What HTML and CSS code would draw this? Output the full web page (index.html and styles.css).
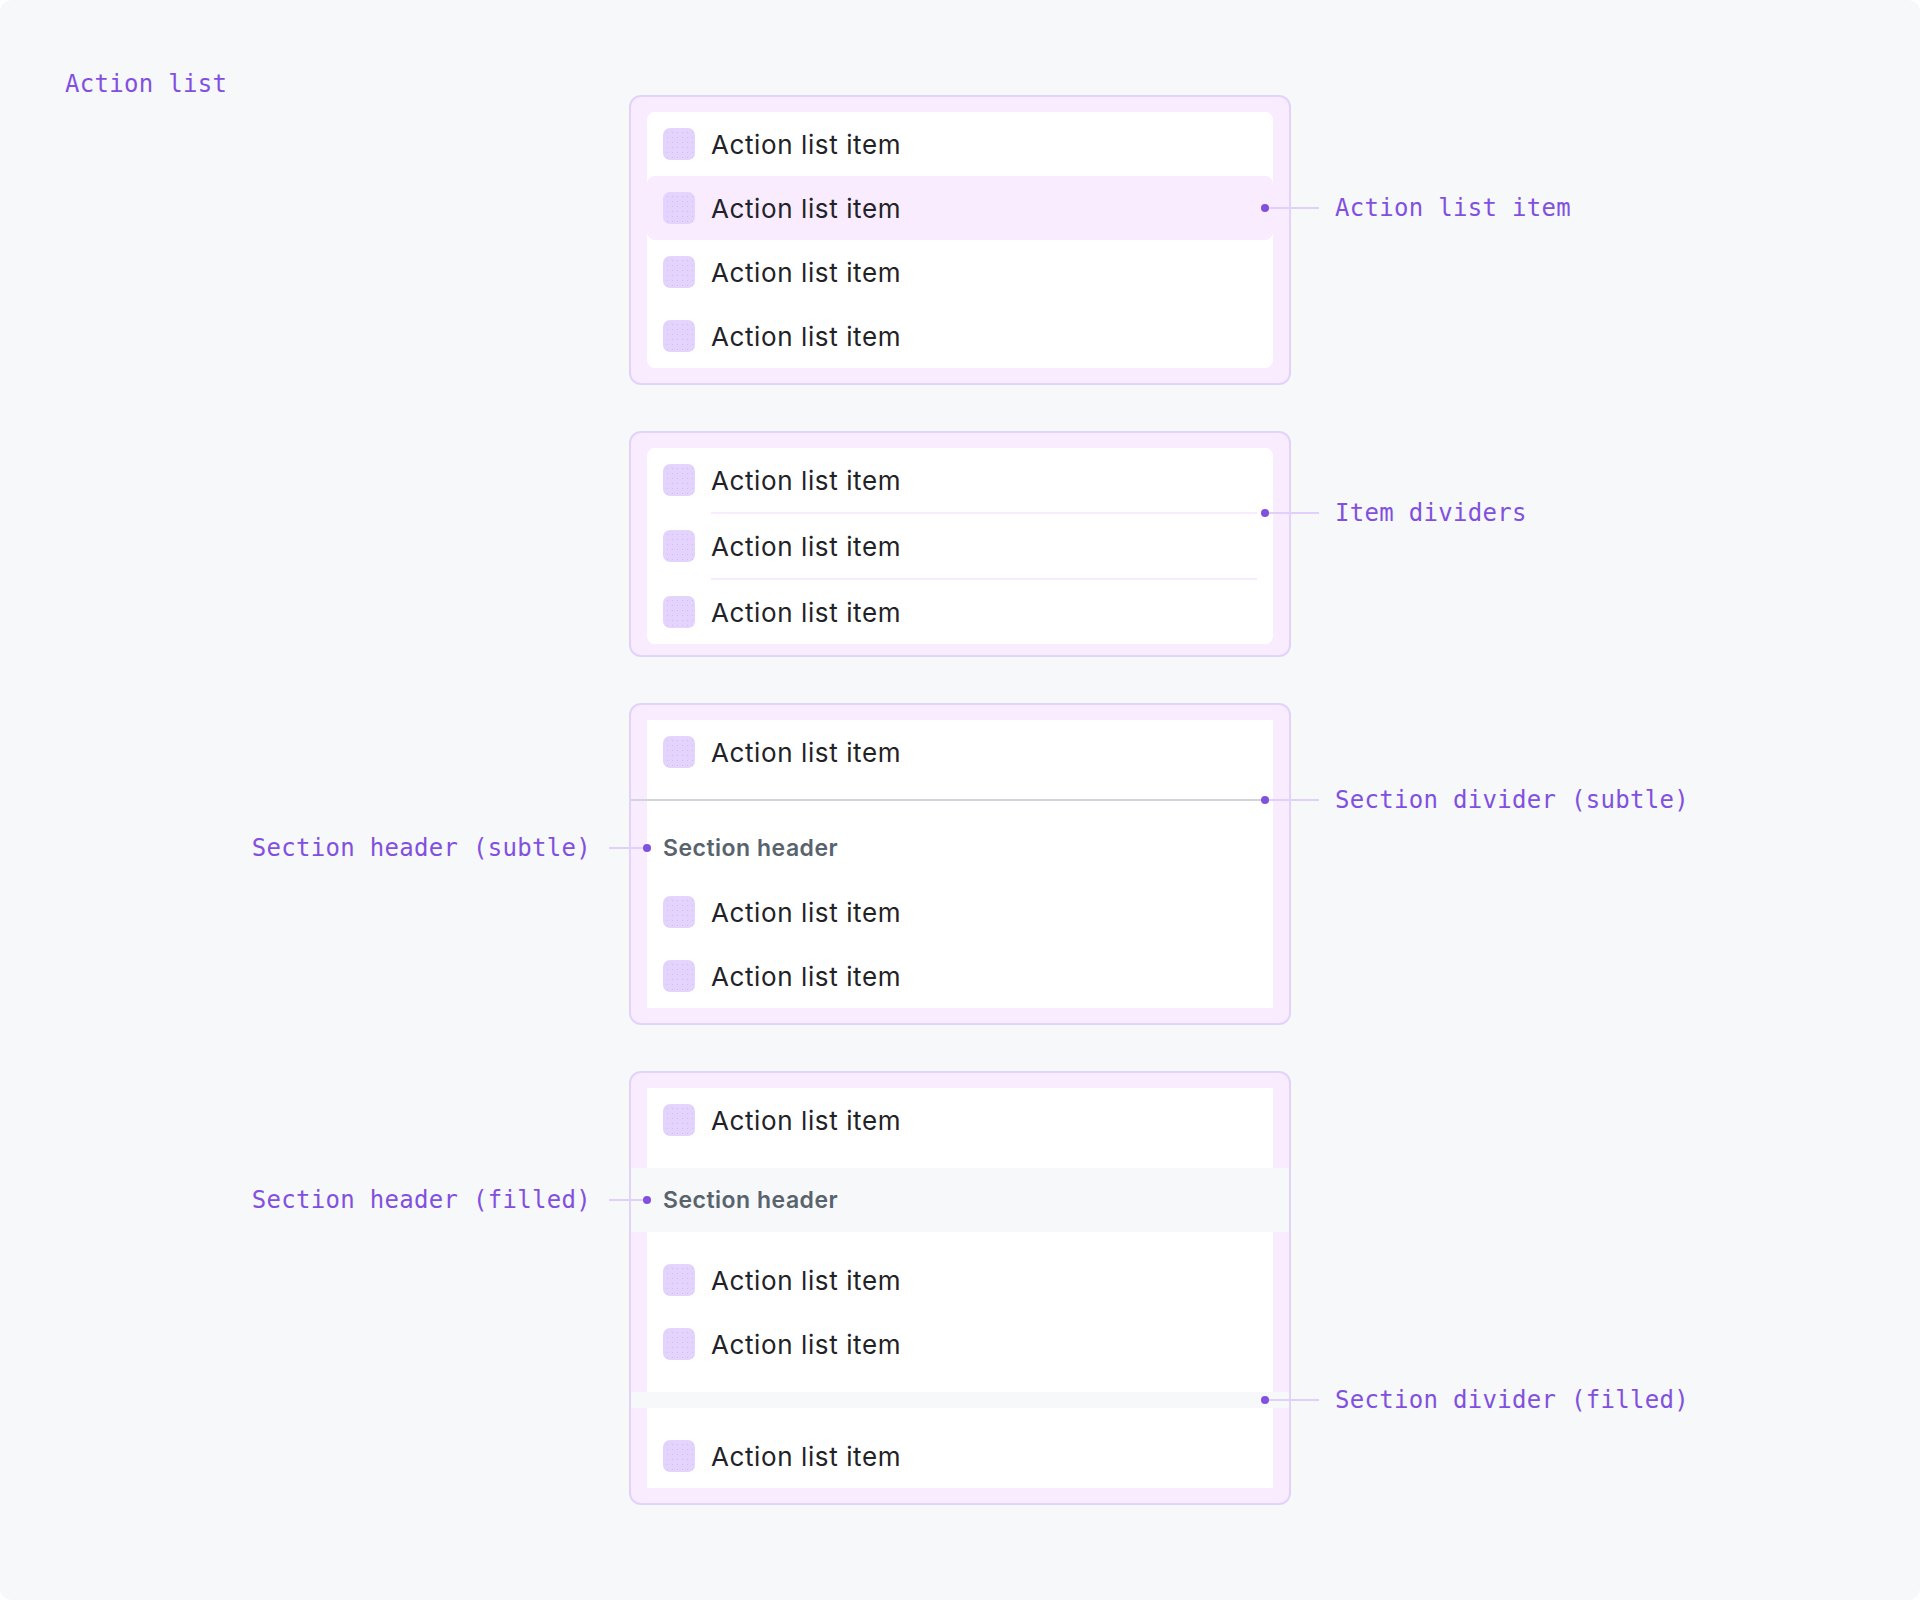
FILE: index.html
```html
<!DOCTYPE html>
<html>
<head>
<meta charset="utf-8">
<link rel="stylesheet" href="styles.css">
</head>
<body>
<div class="frame">
  <div class="title">Action list</div>
  <div class="stack">
    <section class="list">
      <div class="inner round">
        <div class="item"><span class="icon"></span><span>Action list item</span></div>
        <div class="item active"><span class="icon"></span><span>Action list item</span>
          <div class="note note-r"><i class="dot"></i><i class="wire wire-r"></i><span class="note-text">Action list item</span></div>
        </div>
        <div class="item"><span class="icon"></span><span>Action list item</span></div>
        <div class="item"><span class="icon"></span><span>Action list item</span></div>
      </div>
    </section>

    <section class="list list-tight">
      <div class="inner round">
        <div class="item"><span class="icon"></span><span>Action list item</span></div>
        <div class="idiv">
          <div class="note note-r note-idiv"><i class="dot"></i><i class="wire wire-r"></i><span class="note-text">Item dividers</span></div>
        </div>
        <div class="item"><span class="icon"></span><span>Action list item</span></div>
        <div class="idiv"></div>
        <div class="item"><span class="icon"></span><span>Action list item</span></div>
      </div>
    </section>

    <section class="list">
      <div class="inner">
        <div class="item"><span class="icon"></span><span>Action list item</span></div>
        <div class="sdiv">
          <div class="note note-r note-full"><i class="dot"></i><i class="wire wire-r"></i><span class="note-text">Section divider (subtle)</span></div>
        </div>
        <div class="shead">Section header
          <div class="note note-l"><i class="dot"></i><i class="wire wire-l"></i><span class="note-text">Section header (subtle)</span></div>
        </div>
        <div class="item"><span class="icon"></span><span>Action list item</span></div>
        <div class="item"><span class="icon"></span><span>Action list item</span></div>
      </div>
    </section>

    <section class="list">
      <div class="inner">
        <div class="item"><span class="icon"></span><span>Action list item</span></div>
        <div class="fhead">Section header
          <div class="note note-l note-lfull"><i class="dot"></i><i class="wire wire-l"></i><span class="note-text">Section header (filled)</span></div>
        </div>
        <div class="item"><span class="icon"></span><span>Action list item</span></div>
        <div class="item"><span class="icon"></span><span>Action list item</span></div>
        <div class="fband">
          <div class="note note-r note-full"><i class="dot"></i><i class="wire wire-r"></i><span class="note-text">Section divider (filled)</span></div>
        </div>
        <div class="item"><span class="icon"></span><span>Action list item</span></div>
      </div>
    </section>
  </div>
</div>
</body>
</html>
```

FILE: styles.css
```css
* { box-sizing: border-box; margin: 0; padding: 0; }
html, body { background: #ffffff; }
body { width: 1920px; height: 1600px; overflow: hidden; }

.frame {
  width: 1920px;
  height: 1600px;
  background: #f6f8fa;
  border-radius: 12px;
  display: grid;
  grid-template-columns: 1fr 662px 1fr;
  align-items: start;
  padding-top: 68px;
}

.title {
  grid-column: 1;
  grid-row: 1;
  padding-left: 65px;
  font: 24px/32px "DejaVu Sans Mono", monospace;
  letter-spacing: 0.3px;
  color: #8250df;
}

.stack {
  grid-column: 2;
  grid-row: 1;
  margin-top: 27px;
  display: flex;
  flex-direction: column;
  gap: 46px;
}

.list {
  position: relative;
  background: #f9ecfe;
  border: 2px solid #e2d3fb;
  border-radius: 12px;
  padding: 15px 16px;
}
.list-tight { padding-bottom: 11px; }

.inner { background: #ffffff; }
.inner.round { border-radius: 8px; }

.item {
  position: relative;
  height: 64px;
  display: flex;
  align-items: center;
  gap: 16px;
  padding: 0 16px;
  font-family: "Inter", sans-serif;
  font-size: 26px;
  letter-spacing: 0.6px;
  color: #1f2328;
}
.item.active { background: #f9ecfe; border-radius: 8px; }

.icon {
  flex: none;
  width: 32px;
  height: 32px;
  border-radius: 7px;
  background-color: #e4d4fd;
  background-image: radial-gradient(circle, rgba(160, 120, 230, 0.28) 0.7px, transparent 1px);
  background-size: 5px 5px;
  background-position: 2px 2px;
}

.idiv {
  position: relative;
  height: 2px;
  margin: 0 16px 0 64px;
  background: #f7ebfd;
}

.sdiv {
  position: relative;
  height: 32px;
  margin: 0 -16px;
  background: linear-gradient(#d0d5db, #d0d5db) center / 100% 2px no-repeat;
}

.shead, .fhead {
  position: relative;
  height: 64px;
  display: flex;
  align-items: center;
  padding-left: 16px;
  font-family: "Inter", sans-serif;
  font-weight: 600;
  font-size: 23px;
  letter-spacing: 0.5px;
  color: #59636e;
}
.fhead {
  margin: 16px -16px;
  padding-left: 32px;
  background: #f6f8fa;
}

.fband {
  position: relative;
  height: 16px;
  margin: 16px -16px;
  background: #f6f8fa;
}

/* annotations */
.note {
  position: absolute;
  top: 50%;
  transform: translateY(-50%);
  display: flex;
  align-items: center;
  white-space: nowrap;
  font: 24px/32px "DejaVu Sans Mono", monospace;
  font-weight: 400;
  letter-spacing: 0.3px;
  color: #8250df;
  z-index: 2;
}
.note-r { left: calc(100% - 12px); }
.note-idiv { left: calc(100% + 4px); }
.note-full { left: calc(100% - 28px); }
.note-l { right: calc(100% - 4px); flex-direction: row-reverse; }
.note-lfull { right: calc(100% - 20px); }

.dot {
  display: block;
  flex: none;
  width: 8px;
  height: 8px;
  border-radius: 50%;
  background: #8250df;
}
.wire {
  display: block;
  flex: none;
  height: 2px;
  background: #e0d0fb;
}
.wire-r { width: 50px; margin-right: 16px; }
.wire-l { width: 34px; margin-left: 18px; }
```
